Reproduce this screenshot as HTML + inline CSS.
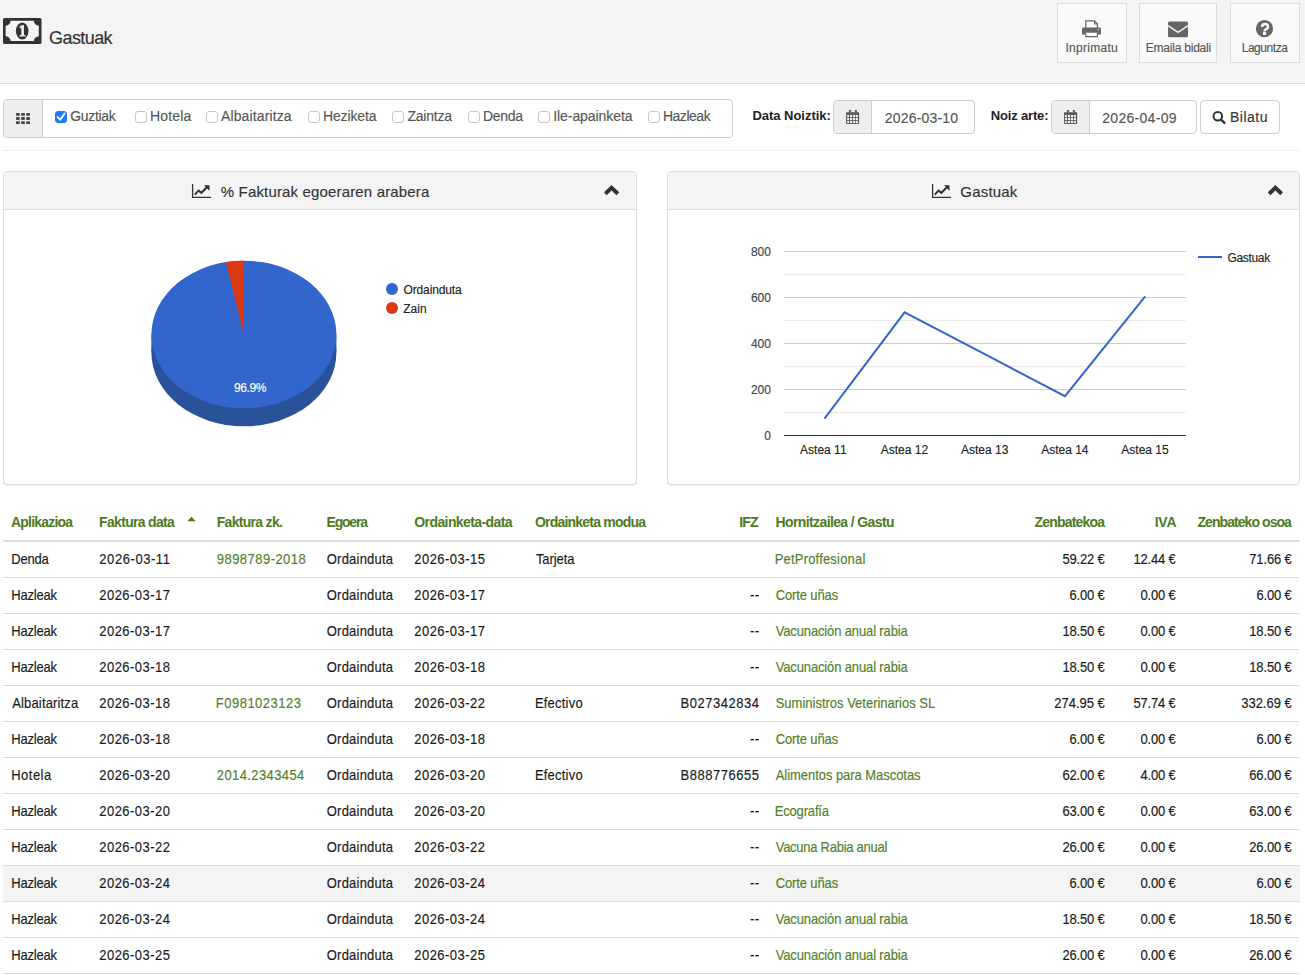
<!DOCTYPE html>
<html><head><meta charset="utf-8"><title>Gastuak</title>
<style>
html,body{margin:0;padding:0;background:#fff}
body{width:1305px;height:975px;position:relative;overflow:hidden;font-family:"Liberation Sans",sans-serif}
.a{position:absolute;box-sizing:border-box}
.t{position:absolute;white-space:nowrap;font-family:"Liberation Sans",sans-serif;-webkit-text-stroke:0.15px currentColor}
.hbtn{position:absolute;box-sizing:border-box;top:3px;height:60px;background:#fafafa;border:1px solid #ddd}
.cb{position:absolute;box-sizing:border-box;width:12px;height:12px;top:111px;border:1px solid #c6c6c6;border-radius:3px;background:#fff}
.rl{position:absolute;left:3px;width:1297px;height:1px;background:#ddd}
svg{position:absolute;overflow:visible}
</style></head><body>
<!-- header -->
<div class="a" style="left:0;top:0;width:1305px;height:83px;background:#f4f4f4"></div>
<div class="a" style="left:0;top:83px;width:1305px;height:1px;background:#dcdcdc"></div>
<div class="hbtn" style="left:1057px;width:70px"></div>
<div class="hbtn" style="left:1139px;width:78px"></div>
<div class="hbtn" style="left:1230px;width:70px"></div>
<svg style="left:0;top:0" width="1305" height="84" viewBox="0 0 1305 84">
  <!-- money -->
  <rect x="3" y="18" width="38.5" height="26" rx="1.6" fill="#333"/>
  <path d="M10.6 20.8 H33.9 A5 5 0 0 0 38.8 25.8 V36.2 A5 5 0 0 0 33.9 41.1 H10.6 A5 5 0 0 0 5.6 36.2 V25.8 A5 5 0 0 0 10.6 20.8 Z" fill="#f4f4f4"/>
  <ellipse cx="22.2" cy="31" rx="6.3" ry="8.6" fill="#333"/>
  <path d="M19.4 26.8 L22.3 24.9 H23.9 V35.2 H25.8 V36.6 H19.4 V35.2 H21.3 V27.6 L19.9 28.4 Z" fill="#f4f4f4"/>
  <!-- printer -->
  <g fill="#666">
    <path d="M1085.2 20.3 H1094.6 L1098 23.6 V29 H1096.8 V24.2 L1094.2 21.5 H1086.4 V29 H1085.2 Z"/>
    <path d="M1094 21 V24.6 H1097.6 V23.6 H1095 V21 Z"/>
    <path d="M1083.4 27.4 H1099.6 Q1101 27.4 1101 28.8 V34.4 H1098 V32.8 H1085 V34.4 H1082 V28.8 Q1082 27.4 1083.4 27.4 Z"/>
    <path d="M1085.2 33 H1086.4 V36 H1096.8 V33 H1098 V37.2 H1085.2 Z"/>
  </g>
  <circle cx="1098.4" cy="29.6" r="0.7" fill="#fafafa"/>
  <!-- envelope -->
  <path d="M1169.5 21.5 H1186.5 Q1188 21.5 1188 23 V35.8 Q1188 37.3 1186.5 37.3 H1169.5 Q1168 37.3 1168 35.8 V23 Q1168 21.5 1169.5 21.5 Z" fill="#666"/>
  <path d="M1168 25.6 L1178 32.4 L1188 25.6" fill="none" stroke="#fafafa" stroke-width="1.3"/>
  <!-- question -->
  <circle cx="1264.5" cy="28.7" r="8.6" fill="#666"/>
  <path d="M1262.1 26.9 Q1262.1 24.1 1265 24.1 Q1268 24.1 1268 26.7 Q1268 28.2 1266.3 29 Q1264.6 29.8 1264.6 31.2" fill="none" stroke="#fafafa" stroke-width="2.5"/>
  <rect x="1263" y="31.8" width="3.1" height="3.1" fill="#fafafa"/>
</svg>

<!-- filter group -->
<div class="a" style="left:3px;top:99px;width:730px;height:39px;border:1px solid #ccc;border-radius:4px;background:#fff"></div>
<div class="a" style="left:4px;top:100px;width:38px;height:37px;background:#eee;border-radius:3px 0 0 3px"></div>
<div class="a" style="left:42px;top:100px;width:1px;height:37px;background:#ccc"></div>
<div class="cb" style="left:55px;background:#1b7cf4;border-color:#1b7cf4"></div>
<div class="cb" style="left:135px"></div>
<div class="cb" style="left:206px"></div>
<div class="cb" style="left:308px"></div>
<div class="cb" style="left:392px"></div>
<div class="cb" style="left:468px"></div>
<div class="cb" style="left:538px"></div>
<div class="cb" style="left:648px"></div>

<!-- date group 1 -->
<div class="a" style="left:833px;top:100px;width:142px;height:34px;border:1px solid #ccc;border-radius:4px;background:#fff"></div>
<div class="a" style="left:834px;top:101px;width:37px;height:32px;background:#eee;border-radius:3px 0 0 3px"></div>
<div class="a" style="left:871px;top:101px;width:1px;height:32px;background:#ccc"></div>
<!-- date group 2 -->
<div class="a" style="left:1051px;top:100px;width:146px;height:34px;border:1px solid #ccc;border-radius:4px;background:#fff"></div>
<div class="a" style="left:1052px;top:101px;width:37px;height:32px;background:#eee;border-radius:3px 0 0 3px"></div>
<div class="a" style="left:1089px;top:101px;width:1px;height:32px;background:#ccc"></div>
<!-- bilatu -->
<div class="a" style="left:1200px;top:100px;width:80px;height:34px;border:1px solid #ccc;border-radius:4px;background:#fff"></div>

<svg style="left:0;top:84px" width="1305" height="60" viewBox="0 84 1305 60">
  <!-- grid icon -->
  <g fill="#4a4a4a">
    <rect x="16" y="113" width="3.8" height="2.8" rx="0.6"/><rect x="21.1" y="113" width="3.8" height="2.8" rx="0.6"/><rect x="26.2" y="113" width="3.8" height="2.8" rx="0.6"/>
    <rect x="16" y="117.1" width="3.8" height="2.8" rx="0.6"/><rect x="21.1" y="117.1" width="3.8" height="2.8" rx="0.6"/><rect x="26.2" y="117.1" width="3.8" height="2.8" rx="0.6"/>
    <rect x="16" y="121.2" width="3.8" height="2.8" rx="0.6"/><rect x="21.1" y="121.2" width="3.8" height="2.8" rx="0.6"/><rect x="26.2" y="121.2" width="3.8" height="2.8" rx="0.6"/>
  </g>
  <!-- checkmark -->
  <path d="M57.6 117.2 L60.3 119.8 L64.6 113.5" fill="none" stroke="#fff" stroke-width="1.7" stroke-linecap="round" stroke-linejoin="round"/>
  <!-- calendars -->
  <g id="cal1">
    <path d="M846.1 112.2 H859.1 V123.2 Q859.1 124 858.3 124 H846.9 Q846.1 124 846.1 123.2 Z" fill="#555"/>
    <g fill="#eee">
      <rect x="847.1" y="114.9" width="2" height="2.2"/><rect x="849.95" y="114.9" width="2.15" height="2.2"/><rect x="852.85" y="114.9" width="2.2" height="2.2"/><rect x="855.75" y="114.9" width="2.25" height="2.2"/>
      <rect x="847.1" y="117.85" width="2" height="2.15"/><rect x="849.95" y="117.85" width="2.15" height="2.15"/><rect x="852.85" y="117.85" width="2.2" height="2.15"/><rect x="855.75" y="117.85" width="2.25" height="2.15"/>
      <rect x="847.1" y="120.8" width="2" height="2.3"/><rect x="849.95" y="120.8" width="2.15" height="2.3"/><rect x="852.85" y="120.8" width="2.2" height="2.3"/><rect x="855.75" y="120.8" width="2.25" height="2.3"/>
    </g>
    <rect x="848.9" y="110" width="2.2" height="4.2" rx="0.6" fill="#555"/><rect x="854.8" y="110" width="2.2" height="4.2" rx="0.6" fill="#555"/>
    <rect x="849.75" y="110.9" width="0.5" height="2.6" fill="#aaa"/><rect x="855.65" y="110.9" width="0.5" height="2.6" fill="#aaa"/>
  </g>
  <use href="#cal1" x="218" y="0"/>
  <!-- search -->
  <circle cx="1217.8" cy="116.3" r="4.3" fill="none" stroke="#333" stroke-width="2"/>
  <path d="M1221 119.5 L1224.4 122.9" stroke="#333" stroke-width="2.4" stroke-linecap="round"/>
</svg>

<div class="a" style="left:3px;top:150px;width:1297px;height:1px;background:#eee"></div>
<!-- panels -->
<div class="a" style="left:3px;top:171px;width:634px;height:314px;border:1px solid #ddd;border-radius:4px;background:#fff;box-shadow:0 1px 1px rgba(0,0,0,.05)"></div>
<div class="a" style="left:4px;top:172px;width:632px;height:37px;background:#f4f4f4;border-radius:3px 3px 0 0"></div>
<div class="a" style="left:4px;top:209px;width:632px;height:1px;background:#ddd"></div>
<div class="a" style="left:667px;top:171px;width:633px;height:314px;border:1px solid #ddd;border-radius:4px;background:#fff;box-shadow:0 1px 1px rgba(0,0,0,.05)"></div>
<div class="a" style="left:668px;top:172px;width:631px;height:37px;background:#f4f4f4;border-radius:3px 3px 0 0"></div>
<div class="a" style="left:668px;top:209px;width:631px;height:1px;background:#ddd"></div>

<svg style="left:0;top:170px" width="1305" height="320" viewBox="0 170 1305 320">
  <!-- chart icons -->
  <g id="chic" fill="none" stroke="#333">
    <path d="M192.6 184 V197.4 H211" stroke-width="1.3"/>
    <path d="M194.8 194.6 L198.6 190.6 L201.4 192.8 L207.2 187" stroke-width="2"/>
    <path d="M204.6 185.6 H209.2 V190.2 Z" fill="#333" stroke-width="0.6"/>
  </g>
  <use href="#chic" x="740" y="0"/>
  <!-- chevrons -->
  <path d="M604 192.3 L611.6 184.9 L619.2 192.3 L616.5 195.2 L611.6 190.4 L606.7 195.2 Z" fill="#333"/>
  <path d="M1267.8 192.3 L1275.4 184.9 L1283 192.3 L1280.3 195.2 L1275.4 190.4 L1270.5 195.2 Z" fill="#333"/>

  <!-- pie -->
  <ellipse cx="243.9" cy="352.5" rx="92.5" ry="73.8" fill="#2a529b"/><rect x="151.4" y="334.5" width="185" height="18" fill="#2a529b"/>
  <ellipse cx="243.9" cy="334.5" rx="92.5" ry="73.8" fill="#3366cc"/>
  <path d="M243.9 334.5 L226.0 262.1 A92.5 73.8 0 0 1 243.9 260.7 Z" fill="#dc3912"/>
  <circle cx="392" cy="289" r="6" fill="#3366cc"/>
  <circle cx="392" cy="308" r="6" fill="#dc3912"/>

  <!-- line chart -->
  <g fill="#ebebeb">
    <rect x="784" y="274" width="402" height="1"/><rect x="784" y="320" width="402" height="1"/>
    <rect x="784" y="366" width="402" height="1"/><rect x="784" y="412" width="402" height="1"/>
  </g>
  <g fill="#cccccc">
    <rect x="784" y="251" width="402" height="1"/><rect x="784" y="297" width="402" height="1"/>
    <rect x="784" y="343" width="402" height="1"/><rect x="784" y="389" width="402" height="1"/>
  </g>
  <rect x="784" y="435" width="402" height="1" fill="#333"/>
  <polyline points="824.5,418.6 904.6,312.3 984.8,354.2 1065,396.2 1145.2,296.3" fill="none" stroke="#3366cc" stroke-width="2" stroke-linejoin="miter"/>
  <rect x="1198" y="256" width="24" height="2" fill="#3366cc"/>
</svg>

<!-- table -->
<div class="a" style="left:3px;top:866px;width:1297px;height:35px;background:#f4f4f4"></div>
<div class="a" style="left:3px;top:540px;width:1297px;height:2px;background:#ddd"></div>
<div class="rl" style="top:577px"></div><div class="rl" style="top:613px"></div><div class="rl" style="top:649px"></div>
<div class="rl" style="top:685px"></div><div class="rl" style="top:721px"></div><div class="rl" style="top:757px"></div>
<div class="rl" style="top:793px"></div><div class="rl" style="top:829px"></div><div class="rl" style="top:865px"></div>
<div class="rl" style="top:901px"></div><div class="rl" style="top:937px"></div><div class="rl" style="top:973px"></div>
<svg style="left:180px;top:510px" width="20" height="20" viewBox="180 510 20 20">
  <path d="M187.8 521.1 H195.2 L191.5 516.9 Z" fill="#4e7a1e" stroke="#4e7a1e" stroke-width="0.5" stroke-linejoin="round"/>
</svg>

<span class="t" style="left:49.10px;top:29px;font-size:18px;line-height:18px;color:#333;letter-spacing:-0.589px">Gastuak</span>
<span class="t" style="left:1065.40px;top:42px;font-size:12px;line-height:12px;color:#555;letter-spacing:0.282px">Inprimatu</span>
<span class="t" style="left:1145.80px;top:42px;font-size:12px;line-height:12px;color:#555;letter-spacing:-0.222px">Emaila bidali</span>
<span class="t" style="left:1241.70px;top:42px;font-size:12px;line-height:12px;color:#555;letter-spacing:-0.458px">Laguntza</span>
<span class="t" style="left:70.30px;top:109px;font-size:14px;line-height:14px;color:#555;letter-spacing:-0.344px">Guztiak</span>
<span class="t" style="left:149.90px;top:109px;font-size:14px;line-height:14px;color:#555;letter-spacing:0.203px">Hotela</span>
<span class="t" style="left:221.00px;top:109px;font-size:14px;line-height:14px;color:#555;letter-spacing:0.121px">Albaitaritza</span>
<span class="t" style="left:322.90px;top:109px;font-size:14px;line-height:14px;color:#555;letter-spacing:-0.112px">Heziketa</span>
<span class="t" style="left:407.40px;top:109px;font-size:14px;line-height:14px;color:#555;letter-spacing:-0.221px">Zaintza</span>
<span class="t" style="left:483.10px;top:109px;font-size:14px;line-height:14px;color:#555;letter-spacing:-0.342px">Denda</span>
<span class="t" style="left:553.20px;top:109px;font-size:14px;line-height:14px;color:#555;letter-spacing:-0.065px">Ile-apainketa</span>
<span class="t" style="left:662.90px;top:109px;font-size:14px;line-height:14px;color:#555;letter-spacing:-0.463px">Hazleak</span>
<span class="t" style="left:752.40px;top:109px;font-size:13px;line-height:13px;color:#222;font-weight:bold;-webkit-text-stroke:0;letter-spacing:-0.025px">Data Noiztik:</span>
<span class="t" style="left:884.80px;top:111px;font-size:14px;line-height:14px;color:#555;letter-spacing:0.186px">2026-03-10</span>
<span class="t" style="left:990.70px;top:109px;font-size:13px;line-height:13px;color:#222;font-weight:bold;-webkit-text-stroke:0;letter-spacing:-0.156px">Noiz arte:</span>
<span class="t" style="left:1102.30px;top:111px;font-size:14px;line-height:14px;color:#555;letter-spacing:0.286px">2026-04-09</span>
<span class="t" style="left:1230.00px;top:110px;font-size:14px;line-height:14px;color:#333;letter-spacing:0.493px">Bilatu</span>
<span class="t" style="left:220.80px;top:184px;font-size:15px;line-height:15px;color:#333;letter-spacing:0.158px">% Fakturak egoeraren arabera</span>
<span class="t" style="left:960.30px;top:184px;font-size:15px;line-height:15px;color:#333;letter-spacing:0.190px">Gastuak</span>
<span class="t" style="left:233.90px;top:382px;font-size:12px;line-height:12px;color:#fff;letter-spacing:-0.389px">96.9%</span>
<span class="t" style="left:403.50px;top:284px;font-size:12px;line-height:12px;color:#222;letter-spacing:-0.133px">Ordainduta</span>
<span class="t" style="left:403.20px;top:303px;font-size:12px;line-height:12px;color:#222;letter-spacing:0.043px">Zain</span>
<span class="t" style="left:750.95px;top:246px;font-size:12px;line-height:12px;color:#444">800</span>
<span class="t" style="left:750.95px;top:292px;font-size:12px;line-height:12px;color:#444">600</span>
<span class="t" style="left:750.95px;top:338px;font-size:12px;line-height:12px;color:#444">400</span>
<span class="t" style="left:750.95px;top:384px;font-size:12px;line-height:12px;color:#444">200</span>
<span class="t" style="left:764.30px;top:430px;font-size:12px;line-height:12px;color:#444">0</span>
<span class="t" style="left:800.10px;top:444px;font-size:12px;line-height:12px;color:#222">Astea 11</span>
<span class="t" style="left:880.75px;top:444px;font-size:12px;line-height:12px;color:#222">Astea 12</span>
<span class="t" style="left:960.95px;top:444px;font-size:12px;line-height:12px;color:#222">Astea 13</span>
<span class="t" style="left:1041.15px;top:444px;font-size:12px;line-height:12px;color:#222">Astea 14</span>
<span class="t" style="left:1121.35px;top:444px;font-size:12px;line-height:12px;color:#222">Astea 15</span>
<span class="t" style="left:1227.50px;top:252px;font-size:12px;line-height:12px;color:#222;letter-spacing:-0.332px">Gastuak</span>
<span class="t" style="left:11.00px;top:515px;font-size:14px;line-height:14px;color:#4e7a1e;font-weight:bold;-webkit-text-stroke:0;letter-spacing:-0.795px">Aplikazioa</span>
<span class="t" style="left:99.10px;top:515px;font-size:14px;line-height:14px;color:#4e7a1e;font-weight:bold;-webkit-text-stroke:0;letter-spacing:-0.687px">Faktura data</span>
<span class="t" style="left:216.70px;top:515px;font-size:14px;line-height:14px;color:#4e7a1e;font-weight:bold;-webkit-text-stroke:0;letter-spacing:-0.695px">Faktura zk.</span>
<span class="t" style="left:326.50px;top:515px;font-size:14px;line-height:14px;color:#4e7a1e;font-weight:bold;-webkit-text-stroke:0;letter-spacing:-1.195px">Egoera</span>
<span class="t" style="left:414.30px;top:515px;font-size:14px;line-height:14px;color:#4e7a1e;font-weight:bold;-webkit-text-stroke:0;letter-spacing:-0.593px">Ordainketa-data</span>
<span class="t" style="left:535.00px;top:515px;font-size:14px;line-height:14px;color:#4e7a1e;font-weight:bold;-webkit-text-stroke:0;letter-spacing:-0.795px">Ordainketa modua</span>
<span class="t" style="left:739.30px;top:515px;font-size:14px;line-height:14px;color:#4e7a1e;font-weight:bold;-webkit-text-stroke:0;letter-spacing:-0.921px">IFZ</span>
<span class="t" style="left:775.60px;top:515px;font-size:14px;line-height:14px;color:#4e7a1e;font-weight:bold;-webkit-text-stroke:0;letter-spacing:-0.618px">Hornitzailea / Gastu</span>
<span class="t" style="left:1034.60px;top:515px;font-size:14px;line-height:14px;color:#4e7a1e;font-weight:bold;-webkit-text-stroke:0;letter-spacing:-0.824px">Zenbatekoa</span>
<span class="t" style="left:1154.70px;top:515px;font-size:14px;line-height:14px;color:#4e7a1e;font-weight:bold;-webkit-text-stroke:0;letter-spacing:-0.244px">IVA</span>
<span class="t" style="left:1197.50px;top:515px;font-size:14px;line-height:14px;color:#4e7a1e;font-weight:bold;-webkit-text-stroke:0;letter-spacing:-0.938px">Zenbateko osoa</span>
<span class="t" style="left:11.20px;top:553px;font-size:13px;line-height:13px;color:#1a1a1a;letter-spacing:-0.195px;transform:scaleY(1.09);transform-origin:0 11px">Denda</span>
<span class="t" style="left:99.30px;top:553px;font-size:13px;line-height:13px;color:#1a1a1a;letter-spacing:0.566px;transform:scaleY(1.09);transform-origin:0 11px">2026-03-11</span>
<span class="t" style="left:216.80px;top:553px;font-size:13px;line-height:13px;color:#52802a;letter-spacing:0.461px;transform:scaleY(1.09);transform-origin:0 11px">9898789-2018</span>
<span class="t" style="left:326.80px;top:553px;font-size:13px;line-height:13px;color:#1a1a1a;letter-spacing:0.212px;transform:scaleY(1.09);transform-origin:0 11px">Ordainduta</span>
<span class="t" style="left:414.30px;top:553px;font-size:13px;line-height:13px;color:#1a1a1a;letter-spacing:0.459px;transform:scaleY(1.09);transform-origin:0 11px">2026-03-15</span>
<span class="t" style="left:535.90px;top:553px;font-size:13px;line-height:13px;color:#1a1a1a;letter-spacing:-0.065px;transform:scaleY(1.09);transform-origin:0 11px">Tarjeta</span>
<span class="t" style="left:774.70px;top:553px;font-size:13px;line-height:13px;color:#52802a;letter-spacing:0.190px;transform:scaleY(1.09);transform-origin:0 11px">PetProffesional</span>
<span class="t" style="left:1062.40px;top:553px;font-size:13px;line-height:13px;color:#1a1a1a;letter-spacing:-0.157px;transform:scaleY(1.09);transform-origin:0 11px">59.22 €</span>
<span class="t" style="left:1133.40px;top:553px;font-size:13px;line-height:13px;color:#1a1a1a;letter-spacing:-0.157px;transform:scaleY(1.09);transform-origin:0 11px">12.44 €</span>
<span class="t" style="left:1249.30px;top:553px;font-size:13px;line-height:13px;color:#1a1a1a;letter-spacing:-0.157px;transform:scaleY(1.09);transform-origin:0 11px">71.66 €</span>
<span class="t" style="left:11.20px;top:589px;font-size:13px;line-height:13px;color:#1a1a1a;letter-spacing:-0.178px;transform:scaleY(1.09);transform-origin:0 11px">Hazleak</span>
<span class="t" style="left:99.30px;top:589px;font-size:13px;line-height:13px;color:#1a1a1a;letter-spacing:0.459px;transform:scaleY(1.09);transform-origin:0 11px">2026-03-17</span>
<span class="t" style="left:326.80px;top:589px;font-size:13px;line-height:13px;color:#1a1a1a;letter-spacing:0.212px;transform:scaleY(1.09);transform-origin:0 11px">Ordainduta</span>
<span class="t" style="left:414.30px;top:589px;font-size:13px;line-height:13px;color:#1a1a1a;letter-spacing:0.459px;transform:scaleY(1.09);transform-origin:0 11px">2026-03-17</span>
<span class="t" style="left:750.10px;top:589px;font-size:13px;line-height:13px;color:#1a1a1a;letter-spacing:0.271px;transform:scaleY(1.09);transform-origin:0 11px">--</span>
<span class="t" style="left:775.70px;top:589px;font-size:13px;line-height:13px;color:#52802a;letter-spacing:-0.121px;transform:scaleY(1.09);transform-origin:0 11px">Corte uñas</span>
<span class="t" style="left:1069.50px;top:589px;font-size:13px;line-height:13px;color:#1a1a1a;letter-spacing:-0.163px;transform:scaleY(1.09);transform-origin:0 11px">6.00 €</span>
<span class="t" style="left:1140.50px;top:589px;font-size:13px;line-height:13px;color:#1a1a1a;letter-spacing:-0.163px;transform:scaleY(1.09);transform-origin:0 11px">0.00 €</span>
<span class="t" style="left:1256.40px;top:589px;font-size:13px;line-height:13px;color:#1a1a1a;letter-spacing:-0.163px;transform:scaleY(1.09);transform-origin:0 11px">6.00 €</span>
<span class="t" style="left:11.20px;top:625px;font-size:13px;line-height:13px;color:#1a1a1a;letter-spacing:-0.178px;transform:scaleY(1.09);transform-origin:0 11px">Hazleak</span>
<span class="t" style="left:99.30px;top:625px;font-size:13px;line-height:13px;color:#1a1a1a;letter-spacing:0.459px;transform:scaleY(1.09);transform-origin:0 11px">2026-03-17</span>
<span class="t" style="left:326.80px;top:625px;font-size:13px;line-height:13px;color:#1a1a1a;letter-spacing:0.212px;transform:scaleY(1.09);transform-origin:0 11px">Ordainduta</span>
<span class="t" style="left:414.30px;top:625px;font-size:13px;line-height:13px;color:#1a1a1a;letter-spacing:0.459px;transform:scaleY(1.09);transform-origin:0 11px">2026-03-17</span>
<span class="t" style="left:750.10px;top:625px;font-size:13px;line-height:13px;color:#1a1a1a;letter-spacing:0.271px;transform:scaleY(1.09);transform-origin:0 11px">--</span>
<span class="t" style="left:775.70px;top:625px;font-size:13px;line-height:13px;color:#52802a;letter-spacing:-0.137px;transform:scaleY(1.09);transform-origin:0 11px">Vacunación anual rabia</span>
<span class="t" style="left:1062.40px;top:625px;font-size:13px;line-height:13px;color:#1a1a1a;letter-spacing:-0.157px;transform:scaleY(1.09);transform-origin:0 11px">18.50 €</span>
<span class="t" style="left:1140.50px;top:625px;font-size:13px;line-height:13px;color:#1a1a1a;letter-spacing:-0.163px;transform:scaleY(1.09);transform-origin:0 11px">0.00 €</span>
<span class="t" style="left:1249.30px;top:625px;font-size:13px;line-height:13px;color:#1a1a1a;letter-spacing:-0.157px;transform:scaleY(1.09);transform-origin:0 11px">18.50 €</span>
<span class="t" style="left:11.20px;top:661px;font-size:13px;line-height:13px;color:#1a1a1a;letter-spacing:-0.178px;transform:scaleY(1.09);transform-origin:0 11px">Hazleak</span>
<span class="t" style="left:99.30px;top:661px;font-size:13px;line-height:13px;color:#1a1a1a;letter-spacing:0.459px;transform:scaleY(1.09);transform-origin:0 11px">2026-03-18</span>
<span class="t" style="left:326.80px;top:661px;font-size:13px;line-height:13px;color:#1a1a1a;letter-spacing:0.212px;transform:scaleY(1.09);transform-origin:0 11px">Ordainduta</span>
<span class="t" style="left:414.30px;top:661px;font-size:13px;line-height:13px;color:#1a1a1a;letter-spacing:0.459px;transform:scaleY(1.09);transform-origin:0 11px">2026-03-18</span>
<span class="t" style="left:750.10px;top:661px;font-size:13px;line-height:13px;color:#1a1a1a;letter-spacing:0.271px;transform:scaleY(1.09);transform-origin:0 11px">--</span>
<span class="t" style="left:775.70px;top:661px;font-size:13px;line-height:13px;color:#52802a;letter-spacing:-0.137px;transform:scaleY(1.09);transform-origin:0 11px">Vacunación anual rabia</span>
<span class="t" style="left:1062.40px;top:661px;font-size:13px;line-height:13px;color:#1a1a1a;letter-spacing:-0.157px;transform:scaleY(1.09);transform-origin:0 11px">18.50 €</span>
<span class="t" style="left:1140.50px;top:661px;font-size:13px;line-height:13px;color:#1a1a1a;letter-spacing:-0.163px;transform:scaleY(1.09);transform-origin:0 11px">0.00 €</span>
<span class="t" style="left:1249.30px;top:661px;font-size:13px;line-height:13px;color:#1a1a1a;letter-spacing:-0.157px;transform:scaleY(1.09);transform-origin:0 11px">18.50 €</span>
<span class="t" style="left:12.20px;top:697px;font-size:13px;line-height:13px;color:#1a1a1a;letter-spacing:0.157px;transform:scaleY(1.09);transform-origin:0 11px">Albaitaritza</span>
<span class="t" style="left:99.30px;top:697px;font-size:13px;line-height:13px;color:#1a1a1a;letter-spacing:0.459px;transform:scaleY(1.09);transform-origin:0 11px">2026-03-18</span>
<span class="t" style="left:215.80px;top:697px;font-size:13px;line-height:13px;color:#52802a;letter-spacing:0.489px;transform:scaleY(1.09);transform-origin:0 11px">F0981023123</span>
<span class="t" style="left:326.80px;top:697px;font-size:13px;line-height:13px;color:#1a1a1a;letter-spacing:0.212px;transform:scaleY(1.09);transform-origin:0 11px">Ordainduta</span>
<span class="t" style="left:414.30px;top:697px;font-size:13px;line-height:13px;color:#1a1a1a;letter-spacing:0.459px;transform:scaleY(1.09);transform-origin:0 11px">2026-03-22</span>
<span class="t" style="left:534.90px;top:697px;font-size:13px;line-height:13px;color:#1a1a1a;letter-spacing:0.212px;transform:scaleY(1.09);transform-origin:0 11px">Efectivo</span>
<span class="t" style="left:680.60px;top:697px;font-size:13px;line-height:13px;color:#1a1a1a;letter-spacing:0.510px;transform:scaleY(1.09);transform-origin:0 11px">B027342834</span>
<span class="t" style="left:775.70px;top:697px;font-size:13px;line-height:13px;color:#52802a;letter-spacing:-0.006px;transform:scaleY(1.09);transform-origin:0 11px">Suministros Veterinarios SL</span>
<span class="t" style="left:1054.30px;top:697px;font-size:13px;line-height:13px;color:#1a1a1a;letter-spacing:-0.011px;transform:scaleY(1.09);transform-origin:0 11px">274.95 €</span>
<span class="t" style="left:1133.40px;top:697px;font-size:13px;line-height:13px;color:#1a1a1a;letter-spacing:-0.157px;transform:scaleY(1.09);transform-origin:0 11px">57.74 €</span>
<span class="t" style="left:1241.20px;top:697px;font-size:13px;line-height:13px;color:#1a1a1a;letter-spacing:-0.011px;transform:scaleY(1.09);transform-origin:0 11px">332.69 €</span>
<span class="t" style="left:11.20px;top:733px;font-size:13px;line-height:13px;color:#1a1a1a;letter-spacing:-0.178px;transform:scaleY(1.09);transform-origin:0 11px">Hazleak</span>
<span class="t" style="left:99.30px;top:733px;font-size:13px;line-height:13px;color:#1a1a1a;letter-spacing:0.459px;transform:scaleY(1.09);transform-origin:0 11px">2026-03-18</span>
<span class="t" style="left:326.80px;top:733px;font-size:13px;line-height:13px;color:#1a1a1a;letter-spacing:0.212px;transform:scaleY(1.09);transform-origin:0 11px">Ordainduta</span>
<span class="t" style="left:414.30px;top:733px;font-size:13px;line-height:13px;color:#1a1a1a;letter-spacing:0.459px;transform:scaleY(1.09);transform-origin:0 11px">2026-03-18</span>
<span class="t" style="left:750.10px;top:733px;font-size:13px;line-height:13px;color:#1a1a1a;letter-spacing:0.271px;transform:scaleY(1.09);transform-origin:0 11px">--</span>
<span class="t" style="left:775.70px;top:733px;font-size:13px;line-height:13px;color:#52802a;letter-spacing:-0.121px;transform:scaleY(1.09);transform-origin:0 11px">Corte uñas</span>
<span class="t" style="left:1069.50px;top:733px;font-size:13px;line-height:13px;color:#1a1a1a;letter-spacing:-0.163px;transform:scaleY(1.09);transform-origin:0 11px">6.00 €</span>
<span class="t" style="left:1140.50px;top:733px;font-size:13px;line-height:13px;color:#1a1a1a;letter-spacing:-0.163px;transform:scaleY(1.09);transform-origin:0 11px">0.00 €</span>
<span class="t" style="left:1256.40px;top:733px;font-size:13px;line-height:13px;color:#1a1a1a;letter-spacing:-0.163px;transform:scaleY(1.09);transform-origin:0 11px">6.00 €</span>
<span class="t" style="left:11.20px;top:769px;font-size:13px;line-height:13px;color:#1a1a1a;letter-spacing:0.490px;transform:scaleY(1.09);transform-origin:0 11px">Hotela</span>
<span class="t" style="left:99.30px;top:769px;font-size:13px;line-height:13px;color:#1a1a1a;letter-spacing:0.459px;transform:scaleY(1.09);transform-origin:0 11px">2026-03-20</span>
<span class="t" style="left:216.80px;top:769px;font-size:13px;line-height:13px;color:#52802a;letter-spacing:0.399px;transform:scaleY(1.09);transform-origin:0 11px">2014.2343454</span>
<span class="t" style="left:326.80px;top:769px;font-size:13px;line-height:13px;color:#1a1a1a;letter-spacing:0.212px;transform:scaleY(1.09);transform-origin:0 11px">Ordainduta</span>
<span class="t" style="left:414.30px;top:769px;font-size:13px;line-height:13px;color:#1a1a1a;letter-spacing:0.459px;transform:scaleY(1.09);transform-origin:0 11px">2026-03-20</span>
<span class="t" style="left:534.90px;top:769px;font-size:13px;line-height:13px;color:#1a1a1a;letter-spacing:0.212px;transform:scaleY(1.09);transform-origin:0 11px">Efectivo</span>
<span class="t" style="left:680.60px;top:769px;font-size:13px;line-height:13px;color:#1a1a1a;letter-spacing:0.510px;transform:scaleY(1.09);transform-origin:0 11px">B888776655</span>
<span class="t" style="left:775.70px;top:769px;font-size:13px;line-height:13px;color:#52802a;letter-spacing:-0.048px;transform:scaleY(1.09);transform-origin:0 11px">Alimentos para Mascotas</span>
<span class="t" style="left:1062.40px;top:769px;font-size:13px;line-height:13px;color:#1a1a1a;letter-spacing:-0.157px;transform:scaleY(1.09);transform-origin:0 11px">62.00 €</span>
<span class="t" style="left:1140.50px;top:769px;font-size:13px;line-height:13px;color:#1a1a1a;letter-spacing:-0.163px;transform:scaleY(1.09);transform-origin:0 11px">4.00 €</span>
<span class="t" style="left:1249.30px;top:769px;font-size:13px;line-height:13px;color:#1a1a1a;letter-spacing:-0.157px;transform:scaleY(1.09);transform-origin:0 11px">66.00 €</span>
<span class="t" style="left:11.20px;top:805px;font-size:13px;line-height:13px;color:#1a1a1a;letter-spacing:-0.178px;transform:scaleY(1.09);transform-origin:0 11px">Hazleak</span>
<span class="t" style="left:99.30px;top:805px;font-size:13px;line-height:13px;color:#1a1a1a;letter-spacing:0.459px;transform:scaleY(1.09);transform-origin:0 11px">2026-03-20</span>
<span class="t" style="left:326.80px;top:805px;font-size:13px;line-height:13px;color:#1a1a1a;letter-spacing:0.212px;transform:scaleY(1.09);transform-origin:0 11px">Ordainduta</span>
<span class="t" style="left:414.30px;top:805px;font-size:13px;line-height:13px;color:#1a1a1a;letter-spacing:0.459px;transform:scaleY(1.09);transform-origin:0 11px">2026-03-20</span>
<span class="t" style="left:750.10px;top:805px;font-size:13px;line-height:13px;color:#1a1a1a;letter-spacing:0.271px;transform:scaleY(1.09);transform-origin:0 11px">--</span>
<span class="t" style="left:774.70px;top:805px;font-size:13px;line-height:13px;color:#52802a;letter-spacing:-0.164px;transform:scaleY(1.09);transform-origin:0 11px">Ecografía</span>
<span class="t" style="left:1062.40px;top:805px;font-size:13px;line-height:13px;color:#1a1a1a;letter-spacing:-0.157px;transform:scaleY(1.09);transform-origin:0 11px">63.00 €</span>
<span class="t" style="left:1140.50px;top:805px;font-size:13px;line-height:13px;color:#1a1a1a;letter-spacing:-0.163px;transform:scaleY(1.09);transform-origin:0 11px">0.00 €</span>
<span class="t" style="left:1249.30px;top:805px;font-size:13px;line-height:13px;color:#1a1a1a;letter-spacing:-0.157px;transform:scaleY(1.09);transform-origin:0 11px">63.00 €</span>
<span class="t" style="left:11.20px;top:841px;font-size:13px;line-height:13px;color:#1a1a1a;letter-spacing:-0.178px;transform:scaleY(1.09);transform-origin:0 11px">Hazleak</span>
<span class="t" style="left:99.30px;top:841px;font-size:13px;line-height:13px;color:#1a1a1a;letter-spacing:0.459px;transform:scaleY(1.09);transform-origin:0 11px">2026-03-22</span>
<span class="t" style="left:326.80px;top:841px;font-size:13px;line-height:13px;color:#1a1a1a;letter-spacing:0.212px;transform:scaleY(1.09);transform-origin:0 11px">Ordainduta</span>
<span class="t" style="left:414.30px;top:841px;font-size:13px;line-height:13px;color:#1a1a1a;letter-spacing:0.459px;transform:scaleY(1.09);transform-origin:0 11px">2026-03-22</span>
<span class="t" style="left:750.10px;top:841px;font-size:13px;line-height:13px;color:#1a1a1a;letter-spacing:0.271px;transform:scaleY(1.09);transform-origin:0 11px">--</span>
<span class="t" style="left:775.70px;top:841px;font-size:13px;line-height:13px;color:#52802a;letter-spacing:-0.261px;transform:scaleY(1.09);transform-origin:0 11px">Vacuna Rabia anual</span>
<span class="t" style="left:1062.40px;top:841px;font-size:13px;line-height:13px;color:#1a1a1a;letter-spacing:-0.157px;transform:scaleY(1.09);transform-origin:0 11px">26.00 €</span>
<span class="t" style="left:1140.50px;top:841px;font-size:13px;line-height:13px;color:#1a1a1a;letter-spacing:-0.163px;transform:scaleY(1.09);transform-origin:0 11px">0.00 €</span>
<span class="t" style="left:1249.30px;top:841px;font-size:13px;line-height:13px;color:#1a1a1a;letter-spacing:-0.157px;transform:scaleY(1.09);transform-origin:0 11px">26.00 €</span>
<span class="t" style="left:11.20px;top:877px;font-size:13px;line-height:13px;color:#1a1a1a;letter-spacing:-0.178px;transform:scaleY(1.09);transform-origin:0 11px">Hazleak</span>
<span class="t" style="left:99.30px;top:877px;font-size:13px;line-height:13px;color:#1a1a1a;letter-spacing:0.459px;transform:scaleY(1.09);transform-origin:0 11px">2026-03-24</span>
<span class="t" style="left:326.80px;top:877px;font-size:13px;line-height:13px;color:#1a1a1a;letter-spacing:0.212px;transform:scaleY(1.09);transform-origin:0 11px">Ordainduta</span>
<span class="t" style="left:414.30px;top:877px;font-size:13px;line-height:13px;color:#1a1a1a;letter-spacing:0.459px;transform:scaleY(1.09);transform-origin:0 11px">2026-03-24</span>
<span class="t" style="left:750.10px;top:877px;font-size:13px;line-height:13px;color:#1a1a1a;letter-spacing:0.271px;transform:scaleY(1.09);transform-origin:0 11px">--</span>
<span class="t" style="left:775.70px;top:877px;font-size:13px;line-height:13px;color:#52802a;letter-spacing:-0.121px;transform:scaleY(1.09);transform-origin:0 11px">Corte uñas</span>
<span class="t" style="left:1069.50px;top:877px;font-size:13px;line-height:13px;color:#1a1a1a;letter-spacing:-0.163px;transform:scaleY(1.09);transform-origin:0 11px">6.00 €</span>
<span class="t" style="left:1140.50px;top:877px;font-size:13px;line-height:13px;color:#1a1a1a;letter-spacing:-0.163px;transform:scaleY(1.09);transform-origin:0 11px">0.00 €</span>
<span class="t" style="left:1256.40px;top:877px;font-size:13px;line-height:13px;color:#1a1a1a;letter-spacing:-0.163px;transform:scaleY(1.09);transform-origin:0 11px">6.00 €</span>
<span class="t" style="left:11.20px;top:913px;font-size:13px;line-height:13px;color:#1a1a1a;letter-spacing:-0.178px;transform:scaleY(1.09);transform-origin:0 11px">Hazleak</span>
<span class="t" style="left:99.30px;top:913px;font-size:13px;line-height:13px;color:#1a1a1a;letter-spacing:0.459px;transform:scaleY(1.09);transform-origin:0 11px">2026-03-24</span>
<span class="t" style="left:326.80px;top:913px;font-size:13px;line-height:13px;color:#1a1a1a;letter-spacing:0.212px;transform:scaleY(1.09);transform-origin:0 11px">Ordainduta</span>
<span class="t" style="left:414.30px;top:913px;font-size:13px;line-height:13px;color:#1a1a1a;letter-spacing:0.459px;transform:scaleY(1.09);transform-origin:0 11px">2026-03-24</span>
<span class="t" style="left:750.10px;top:913px;font-size:13px;line-height:13px;color:#1a1a1a;letter-spacing:0.271px;transform:scaleY(1.09);transform-origin:0 11px">--</span>
<span class="t" style="left:775.70px;top:913px;font-size:13px;line-height:13px;color:#52802a;letter-spacing:-0.137px;transform:scaleY(1.09);transform-origin:0 11px">Vacunación anual rabia</span>
<span class="t" style="left:1062.40px;top:913px;font-size:13px;line-height:13px;color:#1a1a1a;letter-spacing:-0.157px;transform:scaleY(1.09);transform-origin:0 11px">18.50 €</span>
<span class="t" style="left:1140.50px;top:913px;font-size:13px;line-height:13px;color:#1a1a1a;letter-spacing:-0.163px;transform:scaleY(1.09);transform-origin:0 11px">0.00 €</span>
<span class="t" style="left:1249.30px;top:913px;font-size:13px;line-height:13px;color:#1a1a1a;letter-spacing:-0.157px;transform:scaleY(1.09);transform-origin:0 11px">18.50 €</span>
<span class="t" style="left:11.20px;top:949px;font-size:13px;line-height:13px;color:#1a1a1a;letter-spacing:-0.178px;transform:scaleY(1.09);transform-origin:0 11px">Hazleak</span>
<span class="t" style="left:99.30px;top:949px;font-size:13px;line-height:13px;color:#1a1a1a;letter-spacing:0.459px;transform:scaleY(1.09);transform-origin:0 11px">2026-03-25</span>
<span class="t" style="left:326.80px;top:949px;font-size:13px;line-height:13px;color:#1a1a1a;letter-spacing:0.212px;transform:scaleY(1.09);transform-origin:0 11px">Ordainduta</span>
<span class="t" style="left:414.30px;top:949px;font-size:13px;line-height:13px;color:#1a1a1a;letter-spacing:0.459px;transform:scaleY(1.09);transform-origin:0 11px">2026-03-25</span>
<span class="t" style="left:750.10px;top:949px;font-size:13px;line-height:13px;color:#1a1a1a;letter-spacing:0.271px;transform:scaleY(1.09);transform-origin:0 11px">--</span>
<span class="t" style="left:775.70px;top:949px;font-size:13px;line-height:13px;color:#52802a;letter-spacing:-0.137px;transform:scaleY(1.09);transform-origin:0 11px">Vacunación anual rabia</span>
<span class="t" style="left:1062.40px;top:949px;font-size:13px;line-height:13px;color:#1a1a1a;letter-spacing:-0.157px;transform:scaleY(1.09);transform-origin:0 11px">26.00 €</span>
<span class="t" style="left:1140.50px;top:949px;font-size:13px;line-height:13px;color:#1a1a1a;letter-spacing:-0.163px;transform:scaleY(1.09);transform-origin:0 11px">0.00 €</span>
<span class="t" style="left:1249.30px;top:949px;font-size:13px;line-height:13px;color:#1a1a1a;letter-spacing:-0.157px;transform:scaleY(1.09);transform-origin:0 11px">26.00 €</span>
</body></html>
